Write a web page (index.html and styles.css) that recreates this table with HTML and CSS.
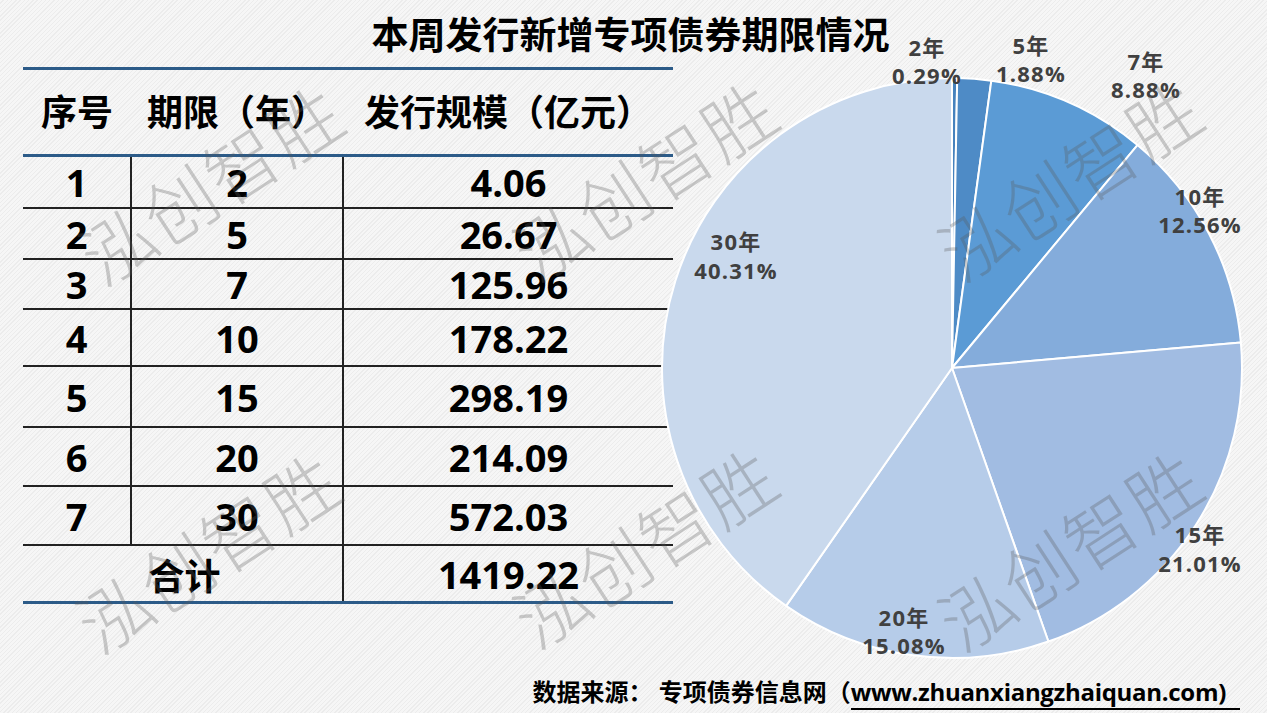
FILE: index.html
```html
<!DOCTYPE html>
<html lang="zh-CN">
<head>
<meta charset="utf-8">
<title>本周发行新增专项债券期限情况</title>
<link rel="stylesheet" href="styles.css">
</head>
<body>
<div class="slide">
  <h1 class="title">本周发行新增专项债券期限情况</h1>

  <table class="data">
    <colgroup>
      <col class="c-no">
      <col class="c-term">
      <col class="c-size">
    </colgroup>
    <thead>
      <tr class="r-head"><th>序号</th><th>期限（年）</th><th>发行规模（亿元）</th></tr>
    </thead>
    <tbody>
      <tr class="r1"><td>1</td><td>2</td><td>4.06</td></tr>
      <tr class="r2"><td>2</td><td>5</td><td>26.67</td></tr>
      <tr class="r3"><td>3</td><td>7</td><td>125.96</td></tr>
      <tr class="r4"><td>4</td><td>10</td><td>178.22</td></tr>
      <tr class="r5"><td>5</td><td>15</td><td>298.19</td></tr>
      <tr class="r6"><td>6</td><td>20</td><td>214.09</td></tr>
      <tr class="r7"><td>7</td><td>30</td><td>572.03</td></tr>
    </tbody>
    <tfoot>
      <tr class="r-total"><td colspan="2" class="total-label">合计</td><td>1419.22</td></tr>
    </tfoot>
  </table>

  <svg class="chart" viewBox="0 0 607 670" width="607" height="670">
    <g class="slices">
      <path class="s-2" d="M292,368 L292,78 A290,290 0 0 1 297.21,78.05 Z"/>
      <path class="s-5" d="M292,368 L297.21,78.05 A290,290 0 0 1 331.34,80.68 Z"/>
      <path class="s-7" d="M292,368 L331.34,80.68 A290,290 0 0 1 477.46,145.05 Z"/>
      <path class="s-10" d="M292,368 L477.46,145.05 A290,290 0 0 1 580.88,342.49 Z"/>
      <path class="s-15" d="M292,368 L580.88,342.49 A290,290 0 0 1 388.38,641.52 Z"/>
      <path class="s-20" d="M292,368 L388.38,641.52 A290,290 0 0 1 126.08,605.85 Z"/>
      <path class="s-30" d="M292,368 L126.08,605.85 A290,290 0 0 1 292,78 Z"/>
    </g>
    <g class="labels">
      <text x="267" y="47">2年</text><text x="267" y="75">0.29%</text>
      <text x="371" y="45">5年</text><text x="371" y="73">1.88%</text>
      <text x="486" y="61">7年</text><text x="486" y="89">8.88%</text>
      <text x="540" y="196">10年</text><text x="540" y="224">12.56%</text>
      <text x="540" y="534">15年</text><text x="540" y="563">21.01%</text>
      <text x="244" y="617">20年</text><text x="244" y="645">15.08%</text>
      <text x="76" y="241">30年</text><text x="76" y="270">40.31%</text>
    </g>
  </svg>

  <p class="source">数据来源：&nbsp;专项债券信息网（<span class="url">www.zhuanxiangzhaiquan.com)</span></p>

  <div class="watermarks" aria-hidden="true">
    <span class="wm wm1">泓创智胜</span>
    <span class="wm wm2">泓创智胜</span>
    <span class="wm wm3">泓创智胜</span>
    <span class="wm wm4">泓创智胜</span>
    <span class="wm wm5">泓创智胜</span>
    <span class="wm wm6">泓创智胜</span>
  </div>
</div>
</body>
</html>
```

FILE: styles.css
```css
html, body {
  margin: 0;
  padding: 0;
}

body {
  width: 1267px;
  height: 713px;
  overflow: hidden;
  font-family: "Open Sans", "Noto Sans CJK SC", sans-serif;
  color: #000;
}

.slide {
  position: relative;
  width: 1267px;
  height: 713px;
  overflow: hidden;
  display: grid;
  grid-template-columns: 23px 637px 1fr;
  grid-template-rows: 67px 537px 1fr;
  background-color: #f3f3f3;
  background-image: repeating-linear-gradient(-45deg, #f6f6f6 0 2px, #ececec 2px 3px);
}

.title {
  grid-column: 1 / -1;
  grid-row: 1;
  align-self: center;
  margin: 0;
  font-family: "Noto Sans CJK SC", sans-serif;
  font-size: 37px;
  font-weight: 700;
  line-height: 1;
  text-align: center;
  padding-right: 6px;
}

/* ---------- table ---------- */
.data {
  grid-column: 2;
  grid-row: 2;
  align-self: start;
  width: 650px;
  border-collapse: collapse;
  table-layout: fixed;
  border-top: 3px solid #2c5b88;
  border-bottom: 3px solid #2c5b88;
}

.c-no { width: 108px; }
.c-term { width: 212px; }
.c-size { width: 330px; }

.data th,
.data td {
  padding: 0;
  text-align: center;
  vertical-align: middle;
  line-height: 1;
  font-weight: 700;
}

.data th {
  font-family: "Noto Sans CJK SC", sans-serif;
  font-size: 36px;
  border-bottom: 3px solid #2c5b88;
  padding-bottom: 5px;
}

.data td {
  font-size: 38px;
  border-bottom: 2px solid #222;
}

.data td + td {
  border-left: 2px solid #222;
}

.r-head th { height: 79px; }
.r1 td { height: 50px; }
.r2 td { height: 49px; }
.r3 td { height: 48px; }
.r4 td { height: 55px; }
.r5 td { height: 59px; }
.r6 td { height: 57px; }
.r7 td { height: 57px; }
.r-total td { height: 55px; border-bottom: 3px solid #2c5b88; }

.data .total-label {
  font-family: "Noto Sans CJK SC", sans-serif;
  font-size: 36px;
  padding-left: 4px;
}

/* ---------- chart ---------- */
.chart {
  grid-column: 3;
  grid-row: 1 / 4;
  align-self: start;
  display: block;
}

.slices path {
  stroke: #ffffff;
  stroke-width: 2;
  stroke-linejoin: round;
}

.s-2 { fill: #4682bd; }
.s-5 { fill: #4e8bc6; }
.s-7 { fill: #5b9bd5; }
.s-10 { fill: #84acdb; }
.s-15 { fill: #a1bce2; }
.s-20 { fill: #b6cce9; }
.s-30 { fill: #c9d9ed; }

.labels text {
  font-family: "Open Sans", "Noto Sans CJK SC", sans-serif;
  font-size: 22px;
  font-weight: 700;
  fill: #404040;
  text-anchor: middle;
  dominant-baseline: central;
  letter-spacing: 1.2px;
}

/* ---------- source ---------- */
.source {
  grid-column: 1 / -1;
  grid-row: 3;
  justify-self: end;
  align-self: end;
  margin: 0 27px 5px 0;
  font-size: 24px;
  font-weight: 700;
  line-height: 32px;
  white-space: nowrap;
}

.url {
  letter-spacing: -0.3px;
  border-bottom: 2px solid #000;
  padding-right: 14px;
}

/* ---------- watermarks ---------- */
.watermarks {
  position: absolute;
  inset: 0;
  pointer-events: none;
}

.wm {
  position: absolute;
  width: 340px;
  margin-left: -170px;
  margin-top: -45px;
  line-height: 90px;
  text-align: center;
  font-family: "Noto Sans CJK SC", sans-serif;
  font-weight: 300;
  font-size: 72px;
  letter-spacing: 2px;
  color: rgba(90, 90, 90, 0.3);
  transform: rotate(-33deg);
  white-space: nowrap;
}

.wm1 { left: 210px; top: 182px; }
.wm2 { left: 644px; top: 178px; }
.wm3 { left: 1069px; top: 178px; }
.wm4 { left: 207px; top: 550px; }
.wm5 { left: 644px; top: 545px; }
.wm6 { left: 1069px; top: 548px; }
```
